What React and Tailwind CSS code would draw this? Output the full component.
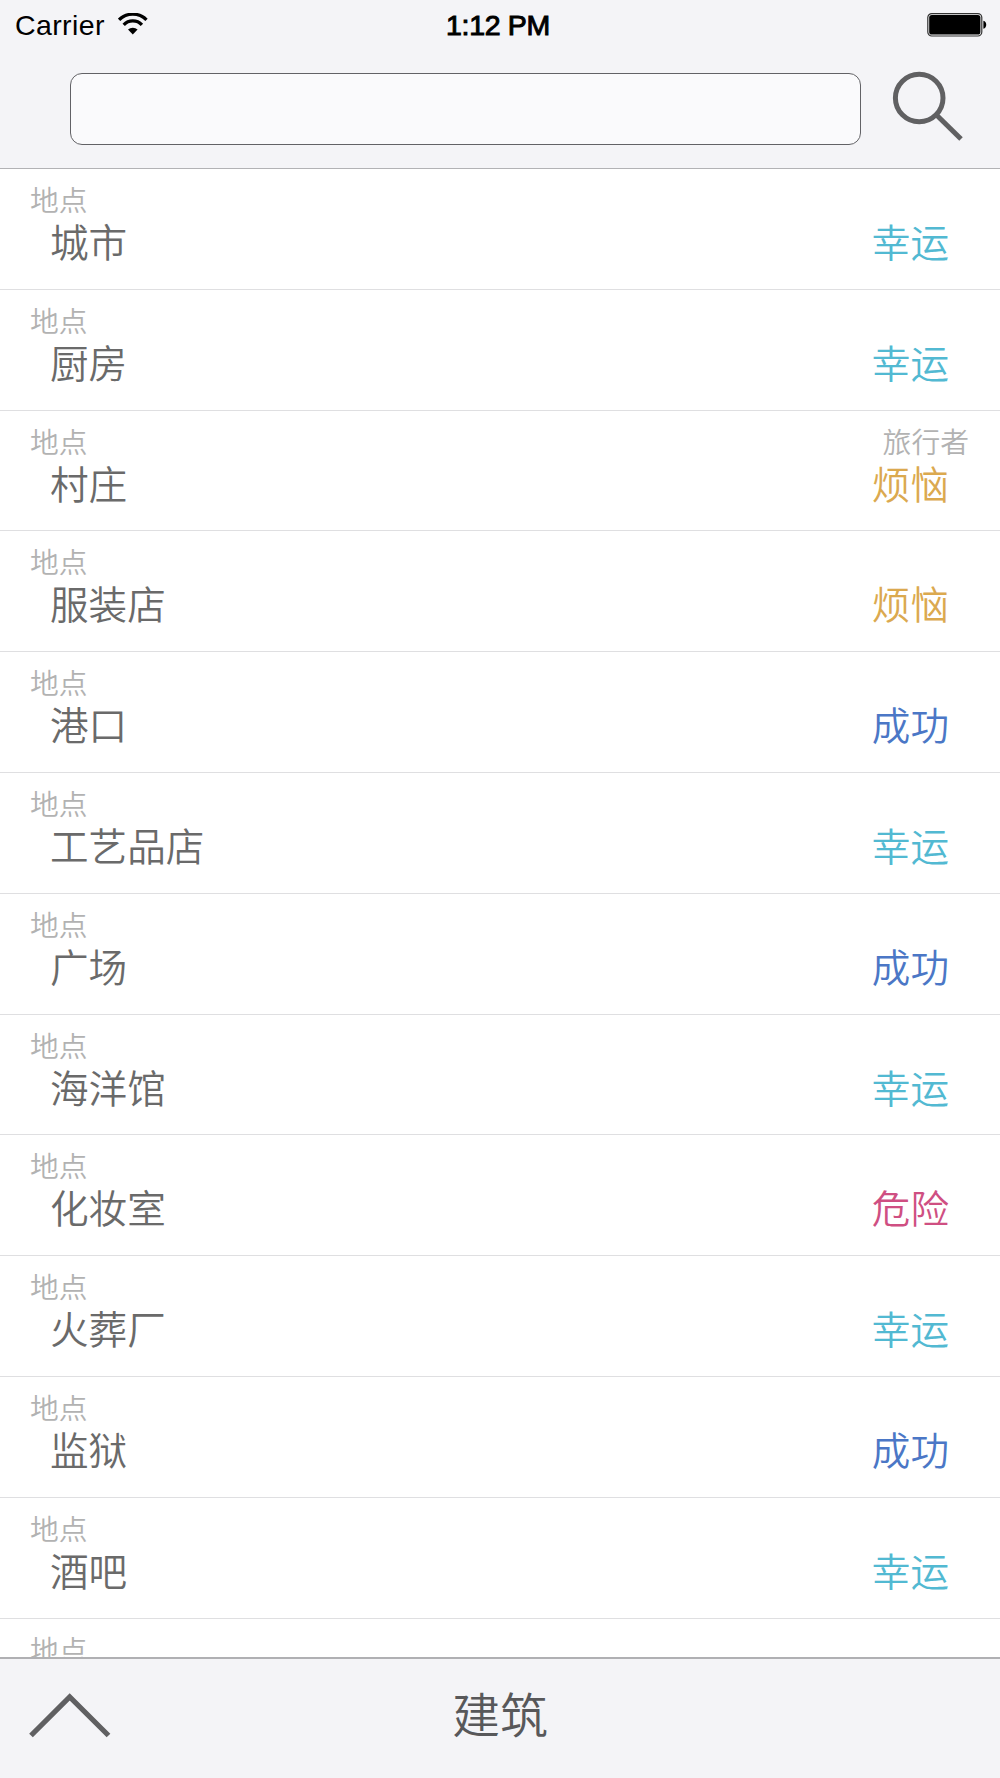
import React from "react";

const LUCK = { text: "幸运", color: "text-[#52b9d2]" };
const TROUBLE = { text: "烦恼", color: "text-[#dba94f]" };
const SUCCESS = { text: "成功", color: "text-[#4b77c6]" };
const DANGER = { text: "危险", color: "text-[#cf4f82]" };

const places = [
  { name: "城市", result: LUCK },
  { name: "厨房", result: LUCK },
  { name: "村庄", result: TROUBLE, who: "旅行者" },
  { name: "服装店", result: TROUBLE },
  { name: "港口", result: SUCCESS },
  { name: "工艺品店", result: LUCK },
  { name: "广场", result: SUCCESS },
  { name: "海洋馆", result: LUCK },
  { name: "化妆室", result: DANGER },
  { name: "火葬厂", result: LUCK },
  { name: "监狱", result: SUCCESS },
  { name: "酒吧", result: LUCK },
  { name: "", result: { text: "", color: "" } },
];

const WifiIcon = () => (
  <svg width="30" height="22" viewBox="0 0 30 22" fill="none" className="mt-[13px] ml-[13px]">
    <path d="M1.1 6.8A19.5 19.5 0 0 1 28.5 6.8" stroke="#000" strokeWidth="3.3" />
    <path d="M5.7 11.9A12.5 12.5 0 0 1 23.9 11.9" stroke="#000" strokeWidth="3.3" />
    <path d="M10 16.6A7 7 0 0 1 19.6 16.6L14.8 21.6Z" fill="#000" />
  </svg>
);

const BatteryIcon = () => (
  <svg width="60" height="26" viewBox="0 0 60 26" className="mt-3 mr-[13px]">
    <rect x="0.8" y="1.6" width="54" height="22.4" rx="4" fill="#f4f4f6" stroke="#333" strokeWidth="1.2" />
    <rect x="2.2" y="3" width="51.2" height="19.6" rx="2.6" fill="#000" />
    <path d="M56.4 8.8C60.2 9.8 60.2 15.8 56.4 16.8Z" fill="#000" />
  </svg>
);

const StatusBar = () => (
  <div className="grid h-[50px] grid-cols-3 text-[28.5px] leading-[50px] text-black">
    <div className="flex pl-[15px]">
      <span className="tracking-[0.4px]">Carrier</span>
      <WifiIcon />
    </div>
    <div className="pr-1 text-center tracking-[-0.3px] [-webkit-text-stroke:1px_#000]">1:12 PM</div>
    <div className="flex justify-end">
      <BatteryIcon />
    </div>
  </div>
);

const SearchBar = () => (
  <div className="flex pt-[22.5px] pl-[70px]">
    <input
      type="text"
      aria-label="搜索"
      className="h-[72.5px] w-[791px] rounded-[12px] border border-[#626266] bg-[#fafafc] px-4 outline-none"
    />
    <button type="button" aria-label="搜索" className="ml-[31px] h-[70px] w-[72px]">
      <svg width="72" height="70" viewBox="0 0 72 70" fill="none" stroke="#606062" strokeWidth="5" className="overflow-visible">
        <circle cx="27.2" cy="25" r="23.8" />
        <path d="M44 41.5L69 66" />
      </svg>
    </button>
  </div>
);

const PlaceRow = ({ place }) => (
  <li className="flex h-[120.8px] justify-between border-b border-[#dfdfe1] pt-[15px]">
    <div className="pl-[30px]">
      <p className="h-[34px] text-[28.8px] leading-[34px] text-[#b2b2b2]">地点</p>
      <p className="pl-5 text-[38.6px] leading-[52px] text-[#6a6a6a]">{place.name}</p>
    </div>
    <div className="flex w-[140px] flex-col items-end pr-[31px]">
      <p className="h-[34px] text-[28.8px] leading-[34px] text-[#b2b2b2]">{place.who}</p>
      <p className={`pr-5 text-[38.6px] leading-[52px] ${place.result.color}`}>{place.result.text}</p>
    </div>
  </li>
);

const BottomBar = () => (
  <footer className="grid h-[121px] grid-cols-3 items-center border-t-2 border-[#b0b0b3] bg-[#f4f4f7]">
    <button type="button" aria-label="展开" className="mb-1 ml-7 w-[84px]">
      <svg width="84" height="50" viewBox="0 0 84 50" fill="none" stroke="#606062" strokeWidth="5.2">
        <path d="M3 43.5L41.7 4.8L80.5 43.5" />
      </svg>
    </button>
    <h1 className="mb-[3px] text-center text-[47.8px] leading-[60px] font-[350] text-[#58585a]">建筑</h1>
  </footer>
);

const App = () => {
  return (
    <div className="flex h-[1778px] w-[1000px] flex-col overflow-hidden bg-white font-['Liberation_Sans','Noto_Sans_CJK_SC',sans-serif] font-[350]">
      <header className="h-[169px] shrink-0 border-b border-[#b2b2b5] bg-[#f4f4f7]">
        <StatusBar />
        <SearchBar />
      </header>
      <ul className="min-h-0 flex-1 overflow-hidden">
        {places.map((place, i) => (
          <PlaceRow key={i} place={place} />
        ))}
      </ul>
      <BottomBar />
    </div>
  );
};

export default App;
